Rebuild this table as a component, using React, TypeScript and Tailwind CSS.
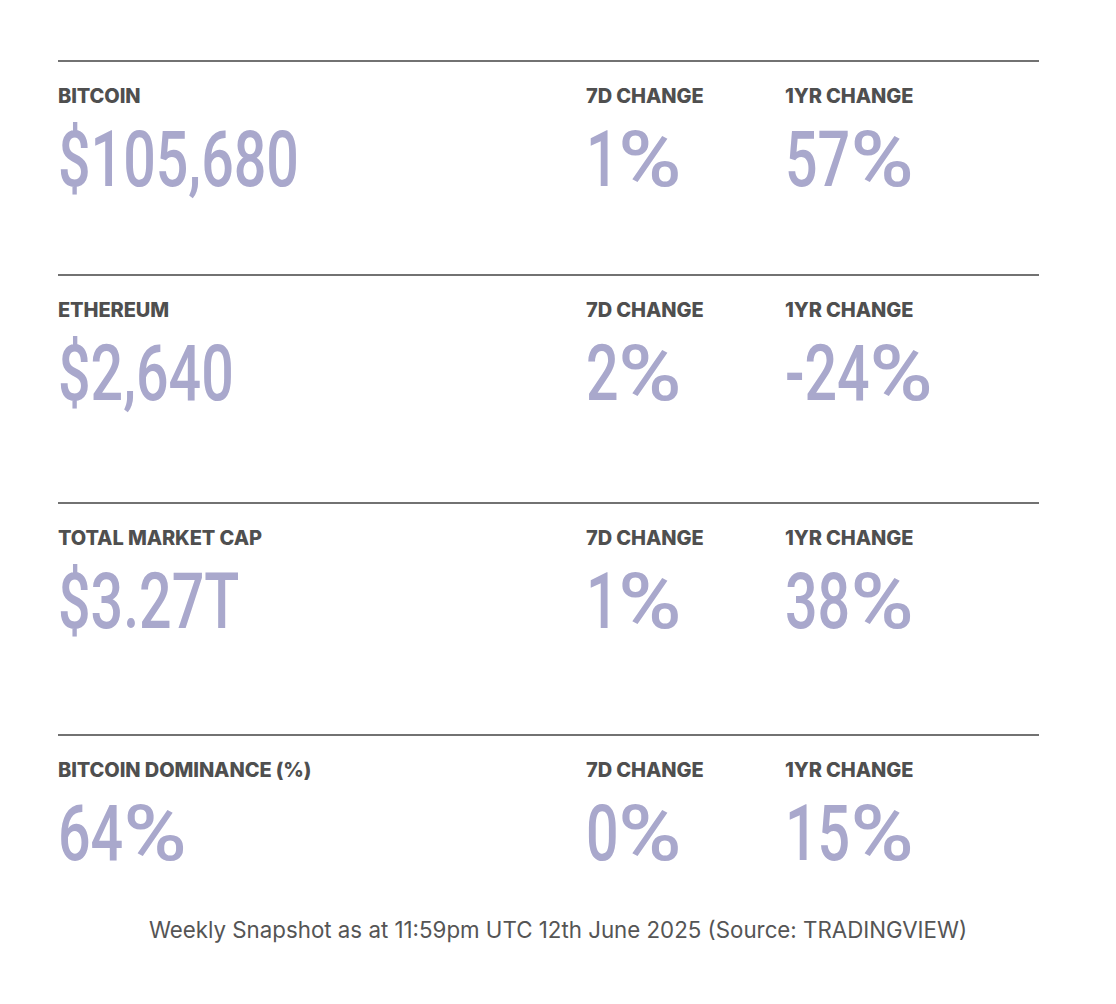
import React from "react";

type Row = {
  label: string;
  value: string;
  d7: string;
  y1: string;
  pb: string;
};

const rows: Row[] = [
  { label: "BITCOIN", value: "$105,680", d7: "1%", y1: "57%", pb: "pb-[75px]" },
  { label: "ETHEREUM", value: "$2,640", d7: "2%", y1: "-24%", pb: "pb-[89px]" },
  { label: "TOTAL MARKET CAP", value: "$3.27T", d7: "1%", y1: "38%", pb: "pb-[93px]" },
  { label: "BITCOIN DOMINANCE (%)", value: "64%", d7: "0%", y1: "15%", pb: "pb-0" },
];

function Label({ children }: { children: React.ReactNode }) {
  return (
    <div className="font-['Inter',sans-serif] font-extrabold text-[20px] leading-[20px] tracking-[-0.005em] text-[#4f4f4f] whitespace-nowrap">
      {children}
    </div>
  );
}

function Big({ value }: { value: string }) {
  const hasPct = value.endsWith("%");
  const main = hasPct ? value.slice(0, -1) : value;
  return (
    <div className="mt-[15px] h-[78px] whitespace-nowrap">
      <span className="inline-block origin-left scale-x-[0.735] font-['Roboto',sans-serif] font-medium text-[78px] leading-[78px] text-[#a9a8cc]">
        {main}
        {hasPct && (
          <span className="inline-block origin-left scale-x-[1.5]">%</span>
        )}
      </span>
    </div>
  );
}

function Cell({ label, value }: { label: string; value: string }) {
  return (
    <div>
      <Label>{label}</Label>
      <Big value={value} />
    </div>
  );
}

export default function App() {
  return (
    <div className="w-[1116px] min-h-[1004px] bg-white pt-[60px]">
      <div className="ml-[58px] w-[981px]">
        {rows.map((r) => (
          <div key={r.label} className={`border-t-2 border-[#727272] pt-6 ${r.pb} grid grid-cols-[528px_199px_1fr]`}>
            <Cell label={r.label} value={r.value} />
            <Cell label="7D CHANGE" value={r.d7} />
            <Cell label="1YR CHANGE" value={r.y1} />
          </div>
        ))}
      </div>
      <div className="mt-[43px] text-center font-['Inter',sans-serif] text-[22.3px] leading-[28px] text-[#555555]">
        Weekly Snapshot as at 11:59pm UTC 12th June 2025 (Source: TRADINGVIEW)
      </div>
    </div>
  );
}
